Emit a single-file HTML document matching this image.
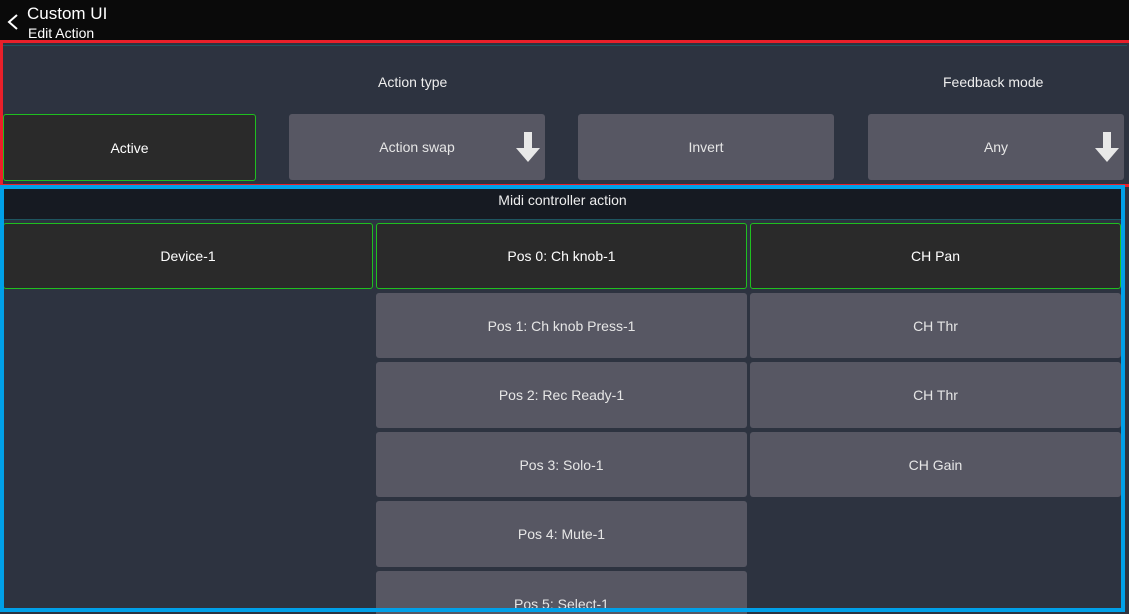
<!DOCTYPE html><html style="overflow:hidden;width:1129px;height:614px"><head><style>
*{margin:0;padding:0;box-sizing:border-box}
body{width:1129px;height:614px;background:#2d3340;position:relative;overflow:hidden;font-family:"Liberation Sans",sans-serif;color:#eee;font-size:14px}
.a{position:absolute}
.b{position:absolute;background:#575763;border-radius:3px;display:flex;align-items:center;justify-content:center;color:#e6e6e6}
.g{background:#2a2a2a;border:1.5px solid #1fbf1f;border-radius:3px;color:#fff}
.ar{position:absolute;right:4px;top:17px}
</style></head><body>
<div class="a" style="left:0;top:0;width:1129px;height:40px;background:#0a0a0a"></div>
<svg class="a" style="left:4px;top:12px" width="16" height="20"><path d="M13 3 L5 10 L13 17" stroke="#fff" stroke-width="2" fill="none"/></svg>
<div class="a" style="left:27px;top:4px;font-size:17px;color:#fff">Custom UI</div>
<div class="a" style="left:28px;top:25px;font-size:14px;color:#fff">Edit Action</div>
<div class="a" style="left:0;top:40px;width:1129px;height:147px;border:3px solid #e8202a;border-right:none"></div>
<div class="a" style="left:3px;top:45px;width:1124px;height:1px;background:#1d5560"></div>
<div class="a" style="left:378px;top:74px">Action type</div>
<div class="a" style="left:943px;top:74px">Feedback mode</div>
<div class="b g" style="left:3px;top:114px;width:253px;height:67px">Active</div>
<div class="b" style="left:289px;top:114px;width:256px;height:66px">Action swap<svg class="ar" width="26" height="32"><path d="M9 1h8v16h8L13 31 1 17h8z" fill="#e8e8e8"/></svg></div>
<div class="b" style="left:578px;top:114px;width:256px;height:66px">Invert</div>
<div class="b" style="left:868px;top:114px;width:256px;height:66px">Any<svg class="ar" width="26" height="32"><path d="M9 1h8v16h8L13 31 1 17h8z" fill="#e8e8e8"/></svg></div>
<div class="a" style="left:4px;top:189px;width:1117px;height:31px;background:#161a22;border-bottom:1px solid #1d5560;text-align:center;line-height:22px">Midi controller action</div>
<div class="b g" style="left:3px;top:223px;width:370px;height:66px">Device-1</div>
<div class="b g" style="left:376px;top:223px;width:371px;height:66px">Pos 0: Ch knob-1</div>
<div class="b g" style="left:750px;top:223px;width:371px;height:66px">CH Pan</div>
<div class="b" style="left:376px;top:293px;width:371px;height:65px">Pos 1: Ch knob Press-1</div>
<div class="b" style="left:376px;top:362px;width:371px;height:66px">Pos 2: Rec Ready-1</div>
<div class="b" style="left:376px;top:432px;width:371px;height:65px">Pos 3: Solo-1</div>
<div class="b" style="left:376px;top:501px;width:371px;height:66px">Pos 4: Mute-1</div>
<div class="a" style="left:376px;top:571px;width:371px;height:43px;overflow:hidden"><div class="b" style="left:0;top:0;width:371px;height:66px">Pos 5: Select-1</div></div>
<div class="b" style="left:750px;top:293px;width:371px;height:65px">CH Thr</div>
<div class="b" style="left:750px;top:362px;width:371px;height:66px">CH Thr</div>
<div class="b" style="left:750px;top:432px;width:371px;height:65px">CH Gain</div>
<div class="a" style="left:0;top:185px;width:1125px;height:427px;border:4px solid #00a0e8"></div>
</body></html>
